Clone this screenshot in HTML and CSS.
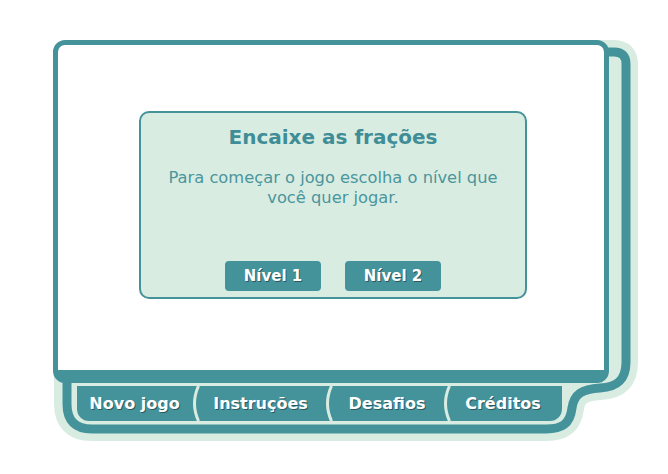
FILE: index.html
```html
<!DOCTYPE html>
<html lang="pt">
<head>
<meta charset="utf-8">
<title>Encaixe as frações</title>
<link rel="stylesheet" href="styles.css">
</head>
<body>
<div class="stage">
  <svg class="backdrop" width="668" height="474" viewBox="0 0 668 474" aria-hidden="true">
    <path class="back-outer" d="M81 52 H614 Q626 52 626 64 V362 C626 381 616 387 600 388 C582 389 574 394 572 408 C570 424 562 429 546 429 H92 Q66 429 66 404 V64 Q66 52 81 52 Z"/>
    <path class="back-band" d="M81 52 H614 Q626 52 626 64 V362 C626 381 616 387 600 388 C582 389 574 394 572 408 C570 424 562 429 546 429 H92 Q67 429 67 404 V64 Q67 52 81 52 Z"/>
  </svg>
  <div class="window">
    <div class="card">
      <h1 class="card-title">Encaixe as frações</h1>
      <p class="card-text">Para começar o jogo escolha o nível que você quer jogar.</p>
      <div class="levels">
        <button class="level-btn">Nível 1</button>
        <button class="level-btn">Nível 2</button>
      </div>
    </div>
  </div>
  <nav class="tabs">
    <a class="tab tab-first">Novo jogo</a>
    <svg class="sep" width="8" height="35" viewBox="0 0 8 35"><path d="M6.5 0 Q-1.5 17.5 6.5 35"/></svg>
    <a class="tab tab-2">Instruções</a>
    <svg class="sep" width="8" height="35" viewBox="0 0 8 35"><path d="M6.5 0 Q-1.5 17.5 6.5 35"/></svg>
    <a class="tab tab-3">Desafios</a>
    <svg class="sep" width="8" height="35" viewBox="0 0 8 35"><path d="M6.5 0 Q-1.5 17.5 6.5 35"/></svg>
    <a class="tab tab-last">Créditos</a>
  </nav>
</div>
</body>
</html>
```

FILE: styles.css
```css
* { box-sizing: border-box; }
html, body { margin: 0; padding: 0; background: #fff; }
body { font-family: "DejaVu Sans", Verdana, sans-serif; }

.stage {
  position: relative;
  width: 668px;
  height: 474px;
  overflow: hidden;
  padding-top: 40px;
}

.backdrop {
  position: absolute;
  left: 0;
  top: 0;
}
.back-outer {
  fill: #d9ece1;
  stroke: #d9ece1;
  stroke-width: 24;
  stroke-linejoin: round;
}
.back-band {
  fill: #d9ece1;
  stroke: #44939b;
  stroke-width: 9;
}

.window {
  position: relative;
  margin-left: 53px;
  width: 556px;
  height: 343px;
  background: #fff;
  border: 5px solid #44939b;
  border-bottom-width: 13px;
  border-radius: 12px;
  padding: 66px 0 0 81px;
}

.card {
  width: 388px;
  height: 188px;
  background: #d9ece1;
  border: 2px solid #44939b;
  border-radius: 10px;
  display: flex;
  flex-direction: column;
  align-items: center;
  padding: 12px 10px 6px;
}
.card-title {
  margin: 0;
  font-size: 20px;
  line-height: 24px;
  font-weight: bold;
  color: #3f8d96;
}
.card-text {
  margin: 19px 0 0;
  font-size: 16.3px;
  line-height: 20px;
  color: #4a969d;
  text-align: center;
}
.levels {
  margin-top: auto;
  display: flex;
  gap: 24px;
}
.level-btn {
  width: 96px;
  height: 30px;
  border: 0;
  border-radius: 4px;
  background: #44939b;
  color: #fff;
  font-family: inherit;
  font-size: 15px;
  font-weight: bold;
  text-shadow: 1px 1px 0 #2b5b61;
  padding: 0;
}

.tabs {
  position: relative;
  display: flex;
  margin: 3px 0 0 77px;
  width: 485px;
  height: 35px;
}
.tab {
  display: flex;
  align-items: center;
  justify-content: center;
  background: #44939b;
  color: #fff;
  font-size: 16px;
  font-weight: bold;
  text-shadow: 1px 1px 0 #2b5b61;
}
.tab-first { width: 115px; border-bottom-left-radius: 12px; }
.tab-2 { width: 125px; padding-right: 4px; }
.tab-3 { width: 110px; padding-right: 2px; }
.tab-last { width: 111px; padding-right: 7px; border-bottom-right-radius: 12px; }
.sep { display: block; background: #44939b; }
.sep path { fill: none; stroke: #d9ece1; stroke-width: 3; }
```
